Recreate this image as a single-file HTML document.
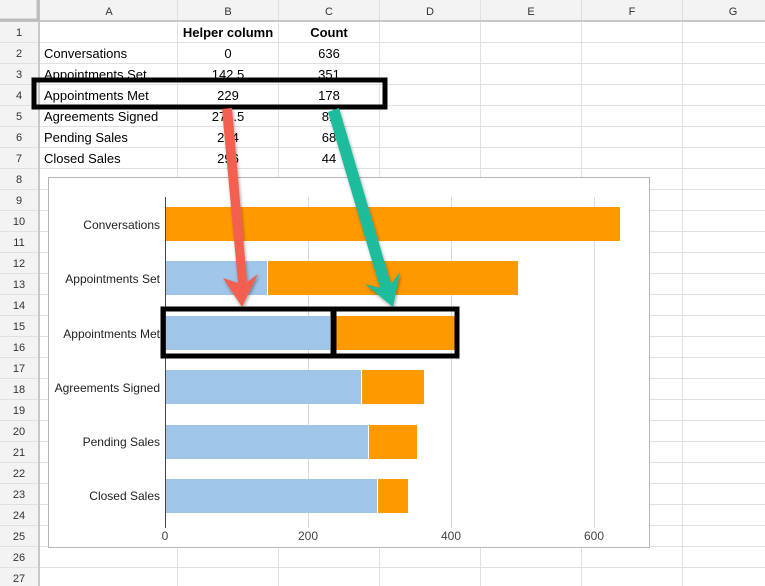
<!DOCTYPE html>
<html><head><meta charset="utf-8"><style>
html,body{margin:0;padding:0;background:#fff;width:765px;height:586px;overflow:hidden}
svg{display:block;font-family:"Liberation Sans",Arial,sans-serif}
</style></head><body>
<svg width="765" height="586" viewBox="0 0 765 586" xmlns="http://www.w3.org/2000/svg">
<defs>
<filter id="sh" x="-20%" y="-20%" width="140%" height="140%"><feDropShadow dx="1" dy="2" stdDeviation="1.5" flood-color="#000" flood-opacity="0.35"/></filter>
</defs>
<rect x="0" y="0" width="765" height="22" fill="#f3f3f3"/>
<rect x="0" y="0" width="40" height="586" fill="#f3f3f3"/>
<g stroke="#e0e0e0" stroke-width="1">
<line x1="177.5" y1="0" x2="177.5" y2="586"/><line x1="278.5" y1="0" x2="278.5" y2="586"/>
<line x1="379.5" y1="0" x2="379.5" y2="586"/><line x1="480.5" y1="0" x2="480.5" y2="586"/>
<line x1="581.5" y1="0" x2="581.5" y2="586"/><line x1="682.5" y1="0" x2="682.5" y2="586"/>
</g>
<g stroke="#e0e0e0" stroke-width="1">
<line x1="0" y1="42.5" x2="765" y2="42.5"/><line x1="0" y1="63.5" x2="765" y2="63.5"/><line x1="0" y1="84.5" x2="765" y2="84.5"/><line x1="0" y1="105.5" x2="765" y2="105.5"/><line x1="0" y1="126.5" x2="765" y2="126.5"/><line x1="0" y1="147.5" x2="765" y2="147.5"/><line x1="0" y1="168.5" x2="765" y2="168.5"/><line x1="0" y1="189.5" x2="765" y2="189.5"/><line x1="0" y1="210.5" x2="765" y2="210.5"/><line x1="0" y1="231.5" x2="765" y2="231.5"/><line x1="0" y1="252.5" x2="765" y2="252.5"/><line x1="0" y1="273.5" x2="765" y2="273.5"/><line x1="0" y1="294.5" x2="765" y2="294.5"/><line x1="0" y1="315.5" x2="765" y2="315.5"/><line x1="0" y1="336.5" x2="765" y2="336.5"/><line x1="0" y1="357.5" x2="765" y2="357.5"/><line x1="0" y1="378.5" x2="765" y2="378.5"/><line x1="0" y1="399.5" x2="765" y2="399.5"/><line x1="0" y1="420.5" x2="765" y2="420.5"/><line x1="0" y1="441.5" x2="765" y2="441.5"/><line x1="0" y1="462.5" x2="765" y2="462.5"/><line x1="0" y1="483.5" x2="765" y2="483.5"/><line x1="0" y1="504.5" x2="765" y2="504.5"/><line x1="0" y1="525.5" x2="765" y2="525.5"/><line x1="0" y1="546.5" x2="765" y2="546.5"/><line x1="0" y1="567.5" x2="765" y2="567.5"/>
</g>
<line x1="0" y1="21" x2="765" y2="21" stroke="#c8c8c8" stroke-width="2"/>
<line x1="39" y1="0" x2="39" y2="586" stroke="#c8c8c8" stroke-width="2"/>
<rect x="0" y="0" width="37" height="19" fill="#f3f3f3"/>
<line x1="38" y1="0" x2="38" y2="21" stroke="#bdbdbd" stroke-width="3"/>
<line x1="0" y1="20" x2="40" y2="20" stroke="#bdbdbd" stroke-width="3"/>
<g font-size="11" fill="#333" text-anchor="middle">
<text x="109" y="15">A</text><text x="228" y="15">B</text><text x="329" y="15">C</text><text x="430" y="15">D</text><text x="531" y="15">E</text><text x="632" y="15">F</text><text x="733" y="15">G</text>
<text x="19" y="36">1</text><text x="19" y="57">2</text><text x="19" y="78">3</text><text x="19" y="99">4</text><text x="19" y="120">5</text><text x="19" y="141">6</text><text x="19" y="162">7</text><text x="19" y="183">8</text><text x="19" y="204">9</text><text x="19" y="225">10</text><text x="19" y="246">11</text><text x="19" y="267">12</text><text x="19" y="288">13</text><text x="19" y="309">14</text><text x="19" y="330">15</text><text x="19" y="351">16</text><text x="19" y="372">17</text><text x="19" y="393">18</text><text x="19" y="414">19</text><text x="19" y="435">20</text><text x="19" y="456">21</text><text x="19" y="477">22</text><text x="19" y="498">23</text><text x="19" y="519">24</text><text x="19" y="540">25</text><text x="19" y="561">26</text><text x="19" y="582">27</text>
</g>
<g font-size="13" fill="#000">
<text x="228" y="37" text-anchor="middle" font-weight="bold">Helper column</text>
<text x="329" y="37" text-anchor="middle" font-weight="bold">Count</text>
<text x="44" y="58">Conversations</text><text x="44" y="79">Appointments Set</text><text x="44" y="100">Appointments Met</text><text x="44" y="121">Agreements Signed</text><text x="44" y="142">Pending Sales</text><text x="44" y="163">Closed Sales</text>
<g text-anchor="middle">
<text x="228" y="58">0</text><text x="228" y="79">142.5</text><text x="228" y="100">229</text><text x="228" y="121">274.5</text><text x="228" y="142">284</text><text x="228" y="163">296</text>
<text x="329" y="58">636</text><text x="329" y="79">351</text><text x="329" y="100">178</text><text x="329" y="121">81</text><text x="329" y="142">68</text><text x="329" y="163">44</text>
</g></g>
<rect x="48.5" y="177.5" width="601" height="370" fill="#fff" stroke="#b5b5b5"/>
<g stroke="#d9d9d9"><line x1="308.5" y1="197" x2="308.5" y2="528"/><line x1="451.5" y1="197" x2="451.5" y2="528"/><line x1="594.5" y1="197" x2="594.5" y2="528"/></g>
<g>
<rect x="166" y="207" width="454" height="34" fill="#ff9900"/>
<rect x="166" y="261" width="101" height="34" fill="#9fc5e8"/><rect x="268" y="261" width="250" height="34" fill="#ff9900"/>
<rect x="166" y="316" width="164" height="34" fill="#9fc5e8"/><rect x="331" y="316" width="125" height="34" fill="#ff9900"/>
<rect x="166" y="370" width="195" height="34" fill="#9fc5e8"/><rect x="362" y="370" width="62" height="34" fill="#ff9900"/>
<rect x="166" y="425" width="202" height="34" fill="#9fc5e8"/><rect x="369" y="425" width="48" height="34" fill="#ff9900"/>
<rect x="166" y="479" width="211" height="34" fill="#9fc5e8"/><rect x="378" y="479" width="30" height="34" fill="#ff9900"/>
</g>
<line x1="165.5" y1="197" x2="165.5" y2="528" stroke="#444"/>
<g font-size="12" fill="#222" text-anchor="end">
<text x="160" y="229">Conversations</text><text x="160" y="283">Appointments Set</text><text x="160" y="338">Appointments Met</text><text x="160" y="392">Agreements Signed</text><text x="160" y="446">Pending Sales</text><text x="160" y="500">Closed Sales</text>
</g>
<g font-size="12" fill="#444" text-anchor="middle"><text x="165" y="540">0</text><text x="308" y="540">200</text><text x="451" y="540">400</text><text x="594" y="540">600</text></g>
<rect x="34" y="80" width="351" height="27" fill="none" stroke="#000" stroke-width="5"/>
<rect x="163" y="309" width="294" height="47" fill="none" stroke="#000" stroke-width="5"/>
<line x1="333.5" y1="309" x2="333.5" y2="356" stroke="#000" stroke-width="6"/>
<g filter="url(#sh)">
<polygon points="222,109 232,108 247,282 258,274 242,307 223,278 238,283" fill="#f4604f"/>
<polygon points="328,112 339,108 391,284 400,272 393,307 365,284 380,288" fill="#1abc9c"/>
</g>
</svg>
</body></html>
